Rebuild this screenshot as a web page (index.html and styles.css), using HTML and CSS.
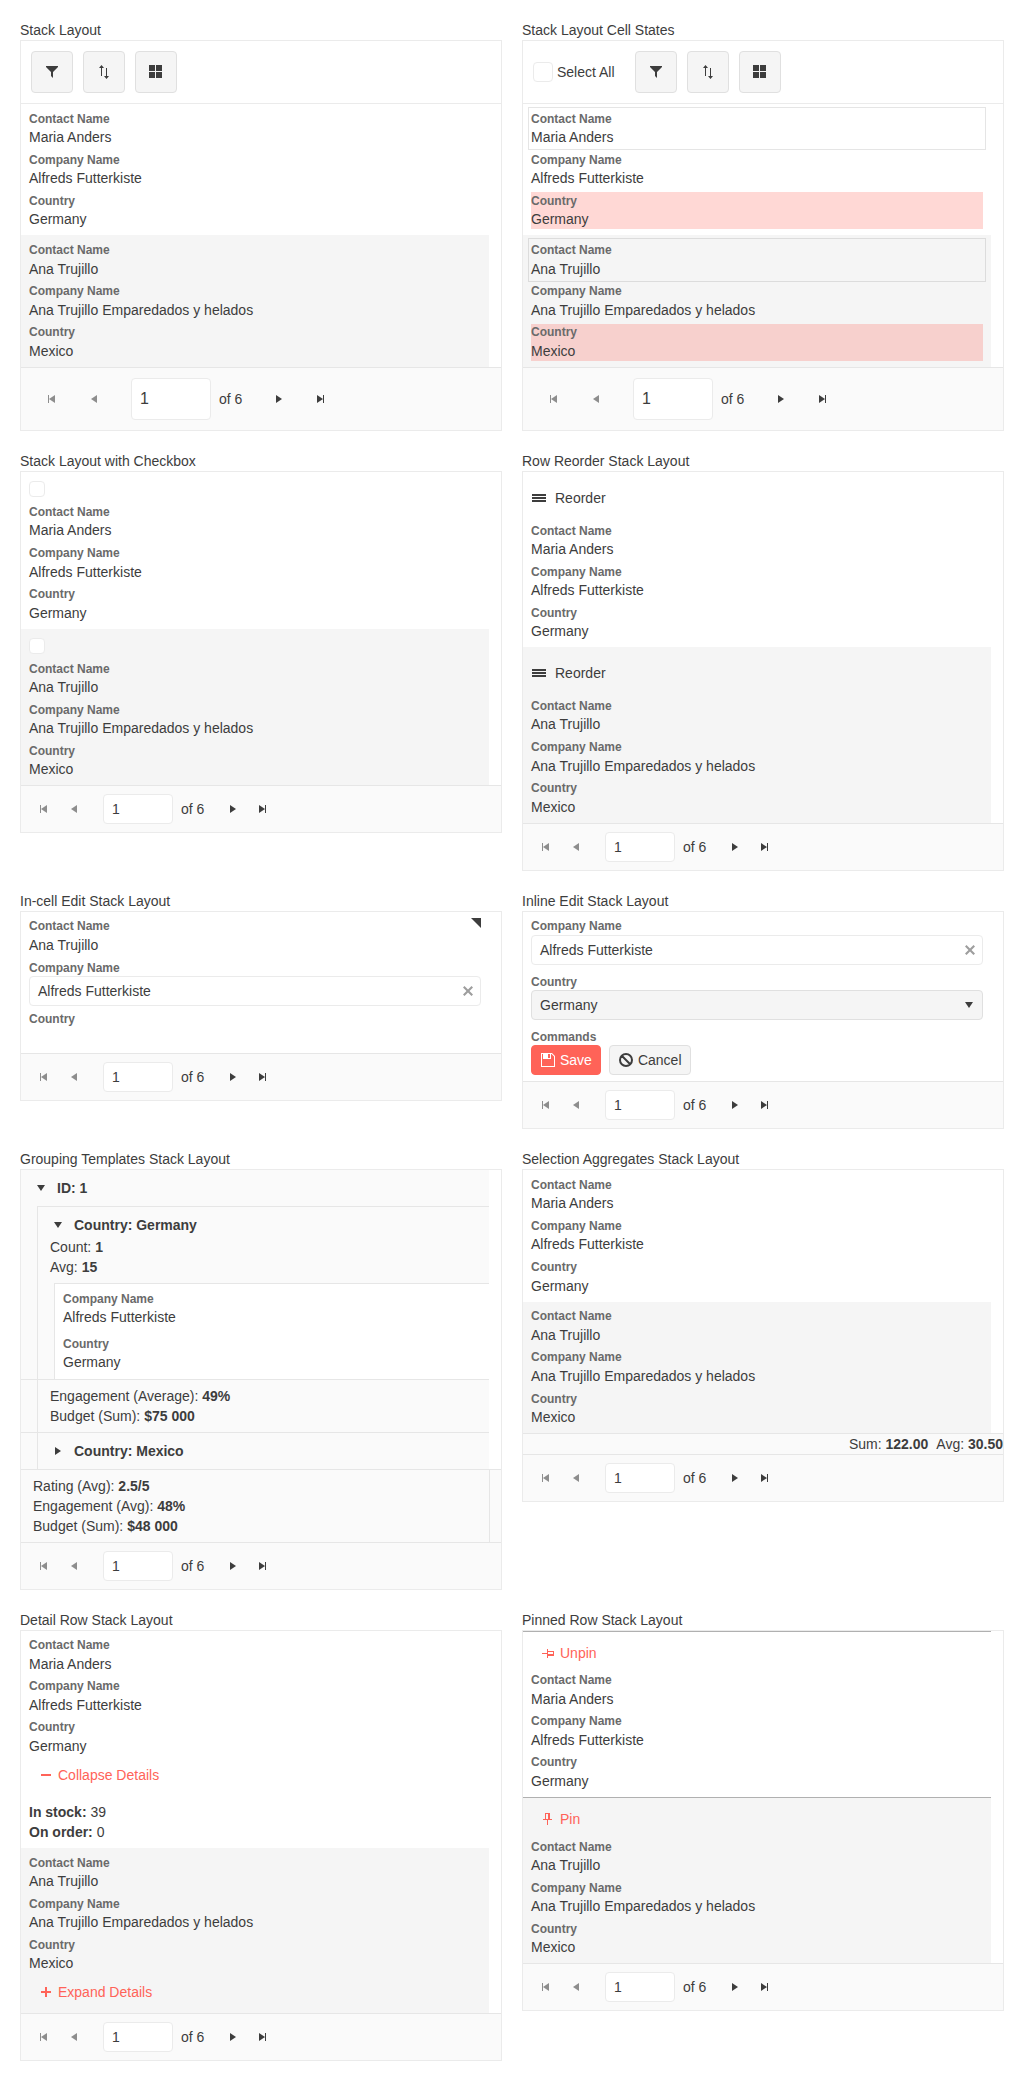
FILE: index.html
```html
<!DOCTYPE html>
<html lang="en">
<head>
<meta charset="utf-8">
<title>Grid Stack Layout</title>
<link rel="stylesheet" href="styles.css">
</head>
<body>
<svg class="sprite" aria-hidden="true">
  <symbol id="filter" viewBox="0 0 16 16"><path d="M2 2h12v1L9 8v6l-2-2V8L2 3z"/></symbol>
  <symbol id="sort" viewBox="0 0 16 16"><path d="M5.500 1L8 4H6v8H5V4H3zM10.500 15L8 12h2V4h1v8h2z"/></symbol>
  <symbol id="columns" viewBox="0 0 16 16"><path d="M1 1h6v6H1zM8 1h6v6H8zM1 8h6v6H1zM8 8h6v6H8z"/></symbol>
  <symbol id="first" viewBox="0 0 16 16"><path d="M4 4h1v8H4zM11 4v8L5 8z"/></symbol>
  <symbol id="prev" viewBox="0 0 16 16"><path d="M5 8l6-4v8z"/></symbol>
  <symbol id="next" viewBox="0 0 16 16"><path d="M11 8l-6 4V4z"/></symbol>
  <symbol id="last" viewBox="0 0 16 16"><path d="M10 4h1v8h-1zM4 12V4l6 4z"/></symbol>
  <symbol id="down" viewBox="0 0 16 16"><path d="M8 11L4 5h8z"/></symbol>
  <symbol id="reorder" viewBox="0 0 16 16"><path d="M1 4h14v2H1zM1 7h14v2H1zM1 10h14v2H1z"/></symbol>
  <symbol id="clear" viewBox="0 0 16 16"><path d="M13 4.500L11.500 3 8 6.500 4.500 3 3 4.500 6.500 8 3 11.500 4.500 13 8 9.500 11.500 13 13 11.500 9.500 8z"/></symbol>
  <symbol id="save" viewBox="0 0 16 16"><path fill-rule="evenodd" d="M1 1h11l3 3v11H1zM2 2v12h12V4.500L11.500 2H11v5H3V2zM8 2v4h2V2z"/></symbol>
  <symbol id="cancel" viewBox="0 0 16 16"><path fill="none" stroke="currentColor" stroke-width="2" d="M14 8A6 6 0 1 1 2 8a6 6 0 0 1 12 0zM3.800 3.800l8.400 8.400"/></symbol>
  <symbol id="minus" viewBox="0 0 16 16"><path d="M3 7h10v2H3z"/></symbol>
  <symbol id="plus" viewBox="0 0 16 16"><path d="M7 3h2v4h4v2H9v4H7V9H3V7h4z"/></symbol>
  <symbol id="pin" viewBox="0 0 16 16"><path fill-rule="evenodd" d="M5 2h5v6h2v1H8v5H7V9H3V8h2zM6 3v5h2V3z"/></symbol>
  <symbol id="unpin" viewBox="0 0 16 16"><path fill-rule="evenodd" d="M2 8h5V4h1v2h6v5H8v2H7V9H2zM8 7v2h5V7z"/></symbol>
</svg>

<main class="page">

<section class="demo">
  <h2 class="title">Stack Layout</h2>
  <div class="grid">
    <div class="toolbar">
      <button class="tool"><svg class="icon"><use href="#filter"/></svg></button>
      <button class="tool"><svg class="icon"><use href="#sort"/></svg></button>
      <button class="tool"><svg class="icon"><use href="#columns"/></svg></button>
    </div>
    <div class="content">
      <div class="row">
        <div class="cell"><div class="label">Contact Name</div><div>Maria Anders</div></div>
        <div class="cell"><div class="label">Company Name</div><div>Alfreds Futterkiste</div></div>
        <div class="cell"><div class="label">Country</div><div>Germany</div></div>
      </div>
      <div class="row alt">
        <div class="cell"><div class="label">Contact Name</div><div>Ana Trujillo</div></div>
        <div class="cell"><div class="label">Company Name</div><div>Ana Trujillo Emparedados y helados</div></div>
        <div class="cell"><div class="label">Country</div><div>Mexico</div></div>
      </div>
    </div>
    <div class="pager large">
      <span class="nav off"><svg class="icon"><use href="#first"/></svg></span><span class="nav off"><svg class="icon"><use href="#prev"/></svg></span><span class="page-no">1</span><span>of 6</span><span class="nav after"><svg class="icon"><use href="#next"/></svg></span><span class="nav"><svg class="icon"><use href="#last"/></svg></span>
    </div>
  </div>
</section>

<section class="demo">
  <h2 class="title">Stack Layout Cell States</h2>
  <div class="grid">
    <div class="toolbar">
      <span class="select-all"><span class="check big"></span><span>Select All</span></span>
      <button class="tool"><svg class="icon"><use href="#filter"/></svg></button>
      <button class="tool"><svg class="icon"><use href="#sort"/></svg></button>
      <button class="tool"><svg class="icon"><use href="#columns"/></svg></button>
    </div>
    <div class="content">
      <div class="row">
        <div class="cell focused"><div class="label">Contact Name</div><div>Maria Anders</div></div>
        <div class="cell"><div class="label">Company Name</div><div>Alfreds Futterkiste</div></div>
        <div class="cell selected"><div class="label">Country</div><div>Germany</div></div>
      </div>
      <div class="row alt">
        <div class="cell focused"><div class="label">Contact Name</div><div>Ana Trujillo</div></div>
        <div class="cell"><div class="label">Company Name</div><div>Ana Trujillo Emparedados y helados</div></div>
        <div class="cell selected"><div class="label">Country</div><div>Mexico</div></div>
      </div>
    </div>
    <div class="pager large">
      <span class="nav off"><svg class="icon"><use href="#first"/></svg></span><span class="nav off"><svg class="icon"><use href="#prev"/></svg></span><span class="page-no">1</span><span>of 6</span><span class="nav after"><svg class="icon"><use href="#next"/></svg></span><span class="nav"><svg class="icon"><use href="#last"/></svg></span>
    </div>
  </div>
</section>

<section class="demo">
  <h2 class="title">Stack Layout with Checkbox</h2>
  <div class="grid">
    <div class="content">
      <div class="row">
        <div class="cell check-cell"><span class="check"></span></div>
        <div class="cell"><div class="label">Contact Name</div><div>Maria Anders</div></div>
        <div class="cell"><div class="label">Company Name</div><div>Alfreds Futterkiste</div></div>
        <div class="cell"><div class="label">Country</div><div>Germany</div></div>
      </div>
      <div class="row alt">
        <div class="cell check-cell"><span class="check"></span></div>
        <div class="cell"><div class="label">Contact Name</div><div>Ana Trujillo</div></div>
        <div class="cell"><div class="label">Company Name</div><div>Ana Trujillo Emparedados y helados</div></div>
        <div class="cell"><div class="label">Country</div><div>Mexico</div></div>
      </div>
    </div>
    <div class="pager">
      <span class="nav off"><svg class="icon"><use href="#first"/></svg></span><span class="nav off"><svg class="icon"><use href="#prev"/></svg></span><span class="page-no">1</span><span>of 6</span><span class="nav after"><svg class="icon"><use href="#next"/></svg></span><span class="nav"><svg class="icon"><use href="#last"/></svg></span>
    </div>
  </div>
</section>

<section class="demo">
  <h2 class="title">Row Reorder Stack Layout</h2>
  <div class="grid">
    <div class="content">
      <div class="row">
        <div class="cell drag"><svg class="icon"><use href="#reorder"/></svg>Reorder</div>
        <div class="cell"><div class="label">Contact Name</div><div>Maria Anders</div></div>
        <div class="cell"><div class="label">Company Name</div><div>Alfreds Futterkiste</div></div>
        <div class="cell"><div class="label">Country</div><div>Germany</div></div>
      </div>
      <div class="row alt">
        <div class="cell drag"><svg class="icon"><use href="#reorder"/></svg>Reorder</div>
        <div class="cell"><div class="label">Contact Name</div><div>Ana Trujillo</div></div>
        <div class="cell"><div class="label">Company Name</div><div>Ana Trujillo Emparedados y helados</div></div>
        <div class="cell"><div class="label">Country</div><div>Mexico</div></div>
      </div>
    </div>
    <div class="pager">
      <span class="nav off"><svg class="icon"><use href="#first"/></svg></span><span class="nav off"><svg class="icon"><use href="#prev"/></svg></span><span class="page-no">1</span><span>of 6</span><span class="nav after"><svg class="icon"><use href="#next"/></svg></span><span class="nav"><svg class="icon"><use href="#last"/></svg></span>
    </div>
  </div>
</section>

<section class="demo">
  <h2 class="title">In-cell Edit Stack Layout</h2>
  <div class="grid">
    <div class="content">
      <div class="row">
        <div class="cell dirty"><div class="label">Contact Name</div><div>Ana Trujillo</div></div>
        <div class="cell"><div class="label">Company Name</div><div class="input"><span>Alfreds Futterkiste</span><svg class="icon clear"><use href="#clear"/></svg></div></div>
        <div class="cell"><div class="label">Country</div><div class="empty"></div></div>
      </div>
    </div>
    <div class="pager">
      <span class="nav off"><svg class="icon"><use href="#first"/></svg></span><span class="nav off"><svg class="icon"><use href="#prev"/></svg></span><span class="page-no">1</span><span>of 6</span><span class="nav after"><svg class="icon"><use href="#next"/></svg></span><span class="nav"><svg class="icon"><use href="#last"/></svg></span>
    </div>
  </div>
</section>

<section class="demo">
  <h2 class="title">Inline Edit Stack Layout</h2>
  <div class="grid">
    <div class="content">
      <div class="row loose">
        <div class="cell"><div class="label">Company Name</div><div class="input"><span>Alfreds Futterkiste</span><svg class="icon clear"><use href="#clear"/></svg></div></div>
        <div class="cell"><div class="label">Country</div><div class="input picker"><span>Germany</span><svg class="icon"><use href="#down"/></svg></div></div>
        <div class="cell"><div class="label">Commands</div>
          <div class="commands">
            <button class="button primary"><svg class="icon"><use href="#save"/></svg>Save</button>
            <button class="button"><svg class="icon"><use href="#cancel"/></svg>Cancel</button>
          </div>
        </div>
      </div>
    </div>
    <div class="pager">
      <span class="nav off"><svg class="icon"><use href="#first"/></svg></span><span class="nav off"><svg class="icon"><use href="#prev"/></svg></span><span class="page-no">1</span><span>of 6</span><span class="nav after"><svg class="icon"><use href="#next"/></svg></span><span class="nav"><svg class="icon"><use href="#last"/></svg></span>
    </div>
  </div>
</section>

<section class="demo">
  <h2 class="title">Grouping Templates Stack Layout</h2>
  <div class="grid">
    <div class="content">
      <div class="group">
        <div class="group-head"><svg class="icon"><use href="#down"/></svg>ID: 1</div>
      </div>
      <div class="group nested">
        <div class="level topped">
          <div class="group-head"><svg class="icon"><use href="#down"/></svg>Country: Germany</div>
          <div class="group-sums"><div>Count: <b>1</b></div><div>Avg: <b>15</b></div></div>
        </div>
      </div>
      <div class="group nested">
        <div class="level nested">
          <div class="level topped row loose item">
            <div class="cell"><div class="label">Company Name</div><div>Alfreds Futterkiste</div></div>
            <div class="cell"><div class="label">Country</div><div>Germany</div></div>
          </div>
        </div>
      </div>
      <div class="group nested topped">
        <div class="level totals"><div>Engagement (Average): <b>49%</b></div><div>Budget (Sum): <b>$75 000</b></div></div>
      </div>
      <div class="group nested topped">
        <div class="level"><div class="group-head"><svg class="icon"><use href="#next"/></svg>Country: Mexico</div></div>
      </div>
    </div>
    <div class="footer">
      <div class="totals"><div>Rating (Avg): <b>2.5/5</b></div><div>Engagement (Avg): <b>48%</b></div><div>Budget (Sum): <b>$48 000</b></div></div>
    </div>
    <div class="pager">
      <span class="nav off"><svg class="icon"><use href="#first"/></svg></span><span class="nav off"><svg class="icon"><use href="#prev"/></svg></span><span class="page-no">1</span><span>of 6</span><span class="nav after"><svg class="icon"><use href="#next"/></svg></span><span class="nav"><svg class="icon"><use href="#last"/></svg></span>
    </div>
  </div>
</section>

<section class="demo">
  <h2 class="title">Selection Aggregates Stack Layout</h2>
  <div class="grid">
    <div class="content">
      <div class="row">
        <div class="cell"><div class="label">Contact Name</div><div>Maria Anders</div></div>
        <div class="cell"><div class="label">Company Name</div><div>Alfreds Futterkiste</div></div>
        <div class="cell"><div class="label">Country</div><div>Germany</div></div>
      </div>
      <div class="row alt">
        <div class="cell"><div class="label">Contact Name</div><div>Ana Trujillo</div></div>
        <div class="cell"><div class="label">Company Name</div><div>Ana Trujillo Emparedados y helados</div></div>
        <div class="cell"><div class="label">Country</div><div>Mexico</div></div>
      </div>
    </div>
    <div class="aggregates"><span>Sum: <b>122.00</b></span><span>Avg: <b>30.50</b></span></div>
    <div class="pager">
      <span class="nav off"><svg class="icon"><use href="#first"/></svg></span><span class="nav off"><svg class="icon"><use href="#prev"/></svg></span><span class="page-no">1</span><span>of 6</span><span class="nav after"><svg class="icon"><use href="#next"/></svg></span><span class="nav"><svg class="icon"><use href="#last"/></svg></span>
    </div>
  </div>
</section>

<section class="demo">
  <h2 class="title">Detail Row Stack Layout</h2>
  <div class="grid">
    <div class="content">
      <div class="row">
        <div class="cell"><div class="label">Contact Name</div><div>Maria Anders</div></div>
        <div class="cell"><div class="label">Company Name</div><div>Alfreds Futterkiste</div></div>
        <div class="cell"><div class="label">Country</div><div>Germany</div></div>
        <div class="cell"><button class="button flat"><svg class="icon"><use href="#minus"/></svg>Collapse Details</button></div>
      </div>
      <div class="detail"><div><b>In stock:</b> 39</div><div><b>On order:</b> 0</div></div>
      <div class="row alt">
        <div class="cell"><div class="label">Contact Name</div><div>Ana Trujillo</div></div>
        <div class="cell"><div class="label">Company Name</div><div>Ana Trujillo Emparedados y helados</div></div>
        <div class="cell"><div class="label">Country</div><div>Mexico</div></div>
        <div class="cell"><button class="button flat"><svg class="icon"><use href="#plus"/></svg>Expand Details</button></div>
      </div>
    </div>
    <div class="pager">
      <span class="nav off"><svg class="icon"><use href="#first"/></svg></span><span class="nav off"><svg class="icon"><use href="#prev"/></svg></span><span class="page-no">1</span><span>of 6</span><span class="nav after"><svg class="icon"><use href="#next"/></svg></span><span class="nav"><svg class="icon"><use href="#last"/></svg></span>
    </div>
  </div>
</section>

<section class="demo">
  <h2 class="title">Pinned Row Stack Layout</h2>
  <div class="grid">
    <div class="content">
      <div class="row pinned">
        <div class="cell"><button class="button flat"><svg class="icon"><use href="#unpin"/></svg>Unpin</button></div>
        <div class="cell"><div class="label">Contact Name</div><div>Maria Anders</div></div>
        <div class="cell"><div class="label">Company Name</div><div>Alfreds Futterkiste</div></div>
        <div class="cell"><div class="label">Country</div><div>Germany</div></div>
      </div>
      <div class="row alt">
        <div class="cell"><button class="button flat"><svg class="icon"><use href="#pin"/></svg>Pin</button></div>
        <div class="cell"><div class="label">Contact Name</div><div>Ana Trujillo</div></div>
        <div class="cell"><div class="label">Company Name</div><div>Ana Trujillo Emparedados y helados</div></div>
        <div class="cell"><div class="label">Country</div><div>Mexico</div></div>
      </div>
    </div>
    <div class="pager">
      <span class="nav off"><svg class="icon"><use href="#first"/></svg></span><span class="nav off"><svg class="icon"><use href="#prev"/></svg></span><span class="page-no">1</span><span>of 6</span><span class="nav after"><svg class="icon"><use href="#next"/></svg></span><span class="nav"><svg class="icon"><use href="#last"/></svg></span>
    </div>
  </div>
</section>

</main>
</body>
</html>
```
FILE: styles.css
```css
*, *::before, *::after { box-sizing: border-box; }

body {
  margin: 0;
  background: #fff;
  color: #3d3d3d;
  font-family: "Liberation Sans", Arial, sans-serif;
  font-size: 14px;
  line-height: 20px;
}

button {
  margin: 0;
  font: inherit;
  color: inherit;
}

.sprite { display: none; }

.icon {
  width: 16px;
  height: 16px;
  flex: none;
  display: block;
  fill: currentColor;
}

.page {
  display: grid;
  grid-template-columns: 1fr 1fr;
  gap: 20px;
  align-items: start;
  padding: 20px 20px 19px;
}

.title {
  margin: 0;
  font-size: 14px;
  font-weight: 400;
}

.grid { border: 1px solid #ebebeb; background: #fff; }

/* toolbar */
.toolbar {
  display: flex;
  align-items: center;
  gap: 10px;
  padding: 10px;
  border-bottom: 1px solid #ebebeb;
}

.tool {
  display: flex;
  align-items: center;
  justify-content: center;
  width: 42px;
  height: 42px;
  padding: 0;
  border: 1px solid #e0e0e0;
  border-radius: 4px;
  background: #f5f5f5;
}

.select-all {
  display: flex;
  align-items: center;
  gap: 4px;
  margin-right: 10px;
}

.check {
  display: block;
  width: 16px;
  height: 16px;
  border: 1px solid #ebebeb;
  border-radius: 4px;
  background: #fff;
}

.check.big { width: 20px; height: 20px; }

/* stacked rows */
.content { padding-right: 12px; }

.row {
  display: flex;
  flex-direction: column;
  gap: 4px;
  padding: 6px 8px;
}

.row.loose { gap: 8px; }
.row.alt { background: #f5f5f5; }

.row.pinned {
  border-top: 1px solid #b0b0b0;
  border-bottom: 1px solid #b0b0b0;
}

.label {
  height: 17.142px;
  padding-top: 0.7px;
  color: #6a6a6a;
  font-size: 12px;
  font-weight: 700;
  line-height: 16px;
}

.cell.focused {
  outline: 1px solid rgba(0, 0, 0, 0.1);
  outline-offset: 2px;
}

.cell.selected { background: rgba(255, 99, 88, 0.25); }

.check-cell { height: 21.4px; padding-top: 3.25px; }

.drag {
  display: flex;
  align-items: center;
  gap: 8px;
  height: 40px;
}

.dirty { position: relative; }

.dirty::after {
  content: "";
  position: absolute;
  top: 0;
  right: 0;
  border: 5px solid;
  border-color: currentColor currentColor transparent transparent;
}

.empty { height: 20px; }

.detail { padding: 6px 8px; }

/* inputs and buttons */
.input {
  display: flex;
  align-items: center;
  justify-content: space-between;
  height: 30px;
  padding: 0 4px 0 8px;
  border: 1px solid #ebebeb;
  border-radius: 4px;
  background: #fff;
}

.picker { border-color: #e0e0e0; background: #f5f5f5; padding-right: 5px; }
.clear { color: #9e9e9e; }

.commands { display: flex; gap: 8px; }

.button {
  display: flex;
  align-items: center;
  gap: 4px;
  height: 30px;
  padding: 0 8px;
  border: 1px solid #e0e0e0;
  border-radius: 4px;
  background: #f5f5f5;
}

.button.primary { border-color: #ff6358; background: #ff6358; color: #fff; }
.button.flat { border-color: transparent; background: none; color: #ff6358; }

/* grouping */
.group { background: #fafafa; }
.nested { padding-left: 16px; }
.level { border-left: 1px solid #e6e6e6; }
.topped { border-top: 1px solid #e6e6e6; }

.group-head {
  display: flex;
  align-items: center;
  gap: 8px;
  padding: 8px 12px;
  font-weight: 700;
}

.group-sums { margin-top: -6px; padding: 0 12px 6px; }
.item { padding-bottom: 6.125px; background: #fff; }
.totals { padding: 6px 12px; }

.footer {
  padding-right: 12px;
  border-top: 1px solid #e6e6e6;
  background: #fafafa;
}

.footer .totals { border-right: 1px solid #e6e6e6; margin-right: -1px; }

.aggregates {
  display: flex;
  justify-content: flex-end;
  gap: 8px;
  border-top: 1px solid #e6e6e6;
  background: #fafafa;
}

/* pager */
.pager {
  display: flex;
  align-items: center;
  padding: 8px;
  border-top: 1px solid #e6e6e6;
  background: #fafafa;
}

.nav {
  display: flex;
  align-items: center;
  justify-content: center;
  width: 30px;
  height: 30px;
}

.nav.off { color: #8d8d8d; }
.nav.after { margin-left: 14px; }

.page-no {
  width: 70px;
  height: 30px;
  margin: 0 8px 0 14px;
  padding: 4px 8px;
  border: 1px solid #ebebeb;
  border-radius: 4px;
  background: #fff;
}

.pager.large { padding: 10px; }
.large .nav { width: 42px; height: 42px; }
.large .nav.after { margin-left: 16px; }

.large .page-no {
  width: 80px;
  height: 42px;
  margin-left: 16px;
  font-size: 16px;
  line-height: 24px;
  padding: 8px;
}
```
